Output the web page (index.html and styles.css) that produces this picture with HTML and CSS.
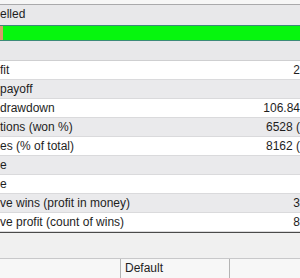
FILE: index.html
```
<!DOCTYPE html>
<html lang="en">
    <head>
        <meta charset="UTF-8" />
        <title>Tester report</title>
        <link rel="stylesheet" href="styles.css">
    </head>
    <body>
        <div class="okno">
            <div class="lista"></div>
            <div class="hlava">elled</div>
            <div class="pruh">
                <div class="bar"><span class="zacatek"></span></div>
            </div>

            <div class="tabulka">
                <div class="radek"><span class="popis">fit</span><span class="hodnota">2</span></div>
                <div class="radek sudy"><span class="popis">payoff</span><span class="hodnota"></span></div>
                <div class="radek"><span class="popis">drawdown</span><span class="hodnota">106.84</span></div>
                <div class="radek sudy"><span class="popis">tions (won %)</span><span class="hodnota">6528 (</span></div>
                <div class="radek"><span class="popis">es (% of total)</span><span class="hodnota">8162 (</span></div>
                <div class="radek sudy"><span class="popis">e</span><span class="hodnota"></span></div>
                <div class="radek"><span class="popis">e</span><span class="hodnota"></span></div>
                <div class="radek sudy"><span class="popis">ve wins (profit in money)</span><span class="hodnota">3</span></div>
                <div class="radek"><span class="popis">ve profit (count of wins)</span><span class="hodnota">8</span></div>
            </div>

            <div class="mezera"></div>
            <div class="spodek">
                <span class="bunka prvni"></span>
                <span class="bunka druha">Default</span>
                <span class="bunka treti"></span>
            </div>
        </div>
    </body>
</html>
```

FILE: styles.css
```
body {
    margin: 0;
    font-family: "Liberation Sans", Arial, sans-serif;
    font-size: 12px;
    color: #1e1e1e;
    background: #f0f0f0;
}

.okno {
    width: 300px;
    height: 278px;
    overflow: hidden;
    display: flex;
    flex-direction: column;
}

.lista {
    height: 4px;
    background: #f6f6f6;
    border-bottom: 1px solid #a9a9ab;
}

.hlava {
    height: 19px;
    line-height: 19px;
    background: #e8e8ea;
}

.pruh {
    height: 37px;
    background: #e8e8ea;
    padding-top: 1px;
    border-bottom: 1px solid #cfcfd1;
}

.bar {
    height: 14px;
    background: #06f60e;
    border-top: 1px solid #3b8a78;
    border-bottom: 1px solid #3b8a78;
    display: flex;
}

.zacatek {
    width: 3px;
    background: #d89a6a;
}

.tabulka {
    display: flex;
    flex-direction: column;
}

.radek {
    height: 18px;
    line-height: 18px;
    background: #ffffff;
    border-bottom: 1px solid #dadadc;
    display: flex;
}

.sudy {
    background: #eaeaec;
}

.popis {
    flex: 1;
    white-space: nowrap;
}

.hodnota {
    white-space: nowrap;
    text-align: right;
}

.mezera {
    height: 27px;
    background: #f0f0f0;
    border-top: 1px solid #4a4a4a;
    border-bottom: 1px solid #c8c8ca;
}

.spodek {
    flex: 1;
    display: flex;
    background: #f7f7f7;
}

.bunka {
    line-height: 19px;
    padding-left: 4px;
    border-right: 1px solid #b4b4b4;
}

.prvni {
    width: 116px;
}

.druha {
    width: 104px;
}

.treti {
    border-right: none;
}
```
